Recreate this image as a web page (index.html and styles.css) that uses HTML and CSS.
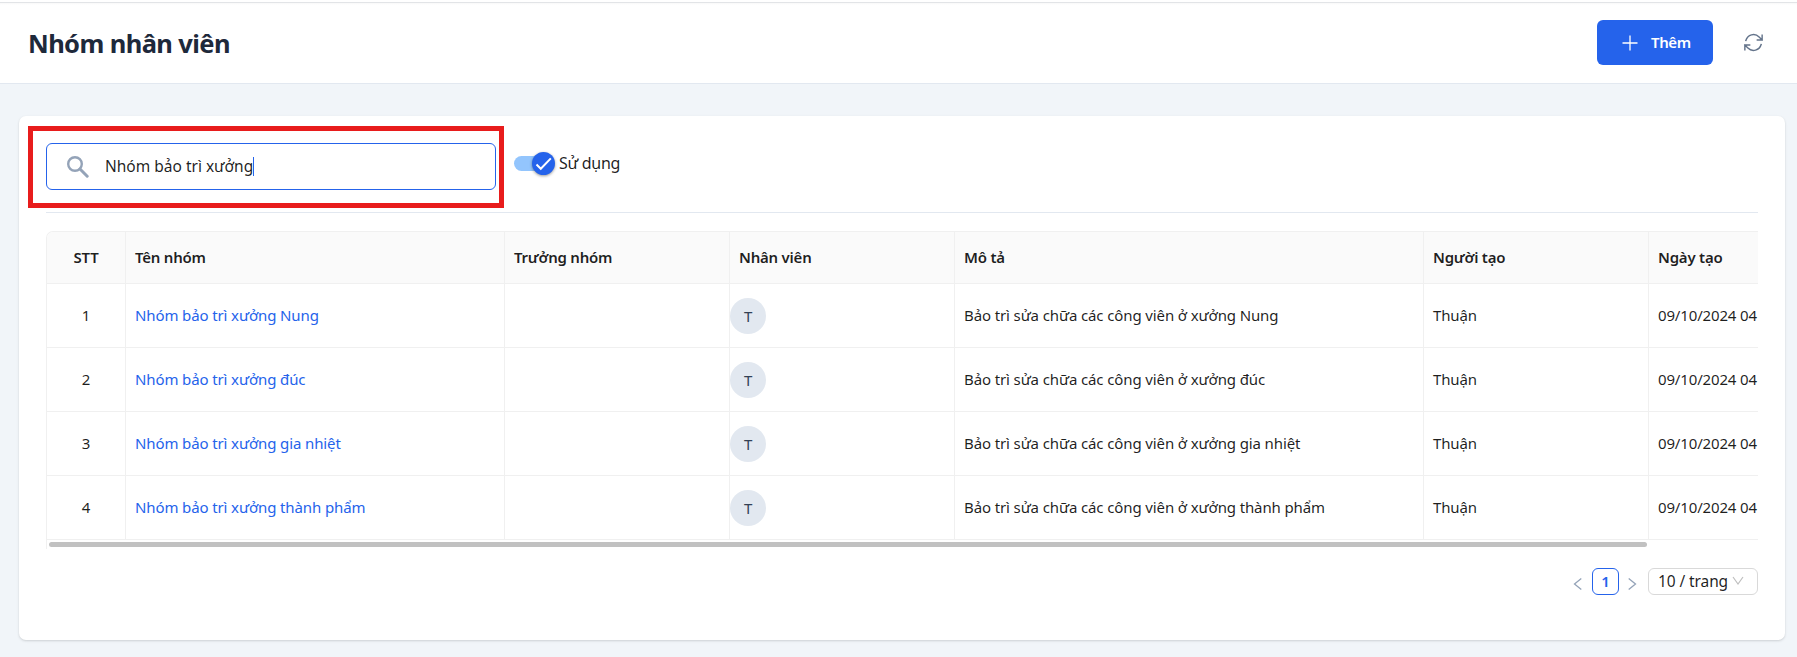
FILE: index.html
```html
<!DOCTYPE html>
<html lang="vi">
<head>
<meta charset="utf-8">
<title>Nhóm nhân viên</title>
<link rel="stylesheet" href="styles.css">
</head>
<body>
<header class="topbar">
  <h1 class="title"><span>Nhóm nhân viên</span></h1>
  <div class="actions">
    <button class="btn-add">
      <svg width="16" height="16" viewBox="0 0 16 16" fill="none" stroke="#fff" stroke-width="1.3"><path d="M8 .5v15M.5 8h15"/></svg>
      <span>Thêm</span>
    </button>
    <svg class="refresh" width="23" height="23" viewBox="0 0 24 24" fill="none" stroke="#64748b" stroke-width="1.5" stroke-linecap="square" stroke-linejoin="miter"><path d="M16.023 9.348h4.992v-.001M2.985 19.644v-4.992m0 0h4.992m-4.993 0l3.181 3.183a8.25 8.25 0 0013.803-3.7M4.031 9.865a8.25 8.25 0 0113.803-3.7l3.181 3.182m0-4.991v4.99"/></svg>
  </div>
</header>
<main class="card">
  <div class="filters">
    <div class="search">
      <svg width="22" height="22" viewBox="0 0 22 22" fill="none" stroke="#94a3b8"><circle cx="8" cy="8" r="6.8" stroke-width="2.4"/><path d="M13 13l7.2 7.2" stroke-width="3" stroke-linecap="round"/></svg>
      <span class="query">Nhóm bảo trì xưởng</span><i class="caret"></i>
    </div>
    <div class="toggle">
      <span class="track"><span class="thumb"><svg width="23" height="23" viewBox="0 0 23 23" fill="none" stroke="#fff" stroke-width="2"><path d="M4.5 12.5l4.3 4.3L18.8 6.4"/></svg></span></span>
      <span class="toggle-label">Sử dụng</span>
    </div>
    <div class="highlight"></div>
  </div>
  <div class="table-wrap">
    <table class="table">
      <colgroup><col class="c-stt"><col class="c-name"><col class="c-mid"><col class="c-mid"><col class="c-desc"><col class="c-mid"><col class="c-mid"></colgroup>
      <thead><tr><th class="center">STT</th><th>Tên nhóm</th><th>Trưởng nhóm</th><th>Nhân viên</th><th>Mô tả</th><th>Người tạo</th><th>Ngày tạo</th></tr></thead>
      <tbody>
        <tr><td class="center">1</td><td><a>Nhóm bảo trì xưởng Nung</a></td><td></td><td class="people"><span class="avatar">T</span></td><td>Bảo trì sửa chữa các công viên ở xưởng Nung</td><td>Thuận</td><td class="date">09/10/2024 04</td></tr>
        <tr><td class="center">2</td><td><a>Nhóm bảo trì xưởng đúc</a></td><td></td><td class="people"><span class="avatar">T</span></td><td>Bảo trì sửa chữa các công viên ở xưởng đúc</td><td>Thuận</td><td class="date">09/10/2024 04</td></tr>
        <tr><td class="center">3</td><td><a>Nhóm bảo trì xưởng gia nhiệt</a></td><td></td><td class="people"><span class="avatar">T</span></td><td>Bảo trì sửa chữa các công viên ở xưởng gia nhiệt</td><td>Thuận</td><td class="date">09/10/2024 04</td></tr>
        <tr><td class="center">4</td><td><a>Nhóm bảo trì xưởng thành phẩm</a></td><td></td><td class="people"><span class="avatar">T</span></td><td>Bảo trì sửa chữa các công viên ở xưởng thành phẩm</td><td>Thuận</td><td class="date">09/10/2024 04</td></tr>
      </tbody>
    </table>
    <div class="scrollbar"></div>
  </div>
  <div class="pager">
    <svg class="arrow" width="10" height="14" viewBox="0 0 10 14" fill="none" stroke="#94a3b8" stroke-width="1.3"><path d="M8.3 1.5L1.5 7l6.8 5.5"/></svg>
    <span class="page">1</span>
    <svg class="arrow" width="10" height="14" viewBox="0 0 10 14" fill="none" stroke="#94a3b8" stroke-width="1.3"><path d="M1.7 1.5L8.5 7l-6.8 5.5"/></svg>
    <div class="size"><span>10 / trang</span><svg width="12" height="10" viewBox="0 0 12 10" fill="none" stroke="#bfbfbf" stroke-width="1.2"><path d="M1 1l5 7 5-7"/></svg></div>
  </div>
</main>
</body>
</html>
```
FILE: styles.css
```css
* { box-sizing: border-box; }
body {
  margin: 0;
  height: 657px;
  overflow: hidden;
  background: #f1f5f9;
  color: rgba(0, 0, 0, 0.88);
  font: 15px/24px "Noto Sans", "Open Sans", sans-serif;
  letter-spacing: -0.12px;
}
.topbar {
  display: flex;
  justify-content: space-between;
  align-items: center;
  height: 84px;
  margin-bottom: 32px;
  padding: 2px 32px 0 28px;
  background: linear-gradient(#fff 2px, #e2e4e7 2px, #e2e4e7 3px, #f8f8f8 3px, #fff 5px);
  border-bottom: 1px solid #e2e8f0;
}
.title { margin: 0; font-size: 25.5px; line-height: 36px; font-weight: 700; color: #1e293b; letter-spacing: -0.6px; }
.actions { display: flex; align-items: center; gap: 29px; }
.btn-add {
  display: flex;
  align-items: center;
  gap: 13px;
  width: 116px;
  height: 45px;
  padding: 0 0 0 25px;
  border: 0;
  border-radius: 6px;
  background: #2563eb;
  color: #fff;
  font: 600 15px/20px "Noto Sans", sans-serif;
  letter-spacing: -0.4px;
}
.btn-add span { padding-bottom: 2px; }
.card {
  width: 1766px;
  height: 524px;
  margin-left: 19px;
  padding: 0 27px;
  border-radius: 7px;
  background: #fff;
  box-shadow: 0 1px 3px rgba(0, 0, 0, 0.1), 0 1px 2px rgba(0, 0, 0, 0.06);
}
.filters {
  position: relative;
  display: flex;
  align-items: flex-start;
  gap: 18px;
  height: 97px;
  padding-top: 27px;
  border-bottom: 1px solid #e2e8f0;
}
.search {
  display: flex;
  align-items: center;
  width: 450px;
  height: 47px;
  padding-left: 20px;
  border: 1px solid #2563eb;
  border-radius: 6px;
}
.query { margin-left: 16px; padding-bottom: 1px; font-size: 15.5px; letter-spacing: 0; }
.caret { width: 1px; height: 19px; background: #2563eb; }
.toggle { display: flex; align-items: center; gap: 4px; margin-top: 8px; }
.toggle-label { font-size: 16px; letter-spacing: -0.3px; }
.track { position: relative; width: 41px; height: 15px; border-radius: 8px; background: linear-gradient(90deg, #93c5fd 34px, transparent 34px); }
.thumb { position: absolute; right: 0; top: -4px; width: 23px; height: 23px; border-radius: 50%; background: #2563eb; box-shadow: 0 1px 3px rgba(0, 0, 0, 0.4); }
.thumb svg { display: block; }
.highlight { position: absolute; left: -18px; top: 10px; width: 476px; height: 82px; border: 5px solid #e81c1c; }
.table-wrap {
  height: 318px;
  margin-top: 18px;
  overflow: hidden;
  border-top: 1px solid #f0f0f0;
  border-left: 1px solid #f0f0f0;
  border-top-left-radius: 7px;
}
.table { table-layout: fixed; width: 1827px; border-collapse: separate; border-spacing: 0; }
.c-stt { width: 79px; }
.c-name { width: 379px; }
.c-mid { width: 225px; }
.c-desc { width: 469px; }
.table th, .table td { padding: 0 9px 1px; text-align: left; white-space: nowrap; border-right: 1px solid #f0f0f0; border-bottom: 1px solid #f0f0f0; }
.table th { height: 52px; padding-bottom: 2px; background: #fafafa; font-size: 15px; font-weight: 600; letter-spacing: -0.22px; }
.table td { height: 64px; }
.table .center { padding-left: 0; padding-right: 0; text-align: center; }
.table .people { padding: 0; }
.table .date { letter-spacing: -0.15px; }
.table a { color: #2563eb; }
.avatar { display: flex; align-items: center; justify-content: center; width: 36px; height: 36px; border-radius: 50%; background: #e2e8f0; color: #334155; font-size: 15px; }
.scrollbar { width: 1598px; height: 5px; margin: 2px 0 0 2px; border-radius: 3px; background: #c1c1c1; }
.pager { display: flex; justify-content: flex-end; align-items: center; margin-top: 19px; }
.arrow { margin-top: 4px; }
.page { width: 27px; height: 27px; margin: 0 8px 0 9px; border: 1px solid #2563eb; border-radius: 6px; color: #2563eb; font-weight: 600; line-height: 24px; text-align: center; }
.size { display: flex; align-items: center; justify-content: space-between; width: 110px; height: 27px; margin-left: 11px; padding: 0 13px 1px 9px; border: 1px solid #d9d9d9; border-radius: 6px; font-size: 15.5px; letter-spacing: -0.1px; }
```
